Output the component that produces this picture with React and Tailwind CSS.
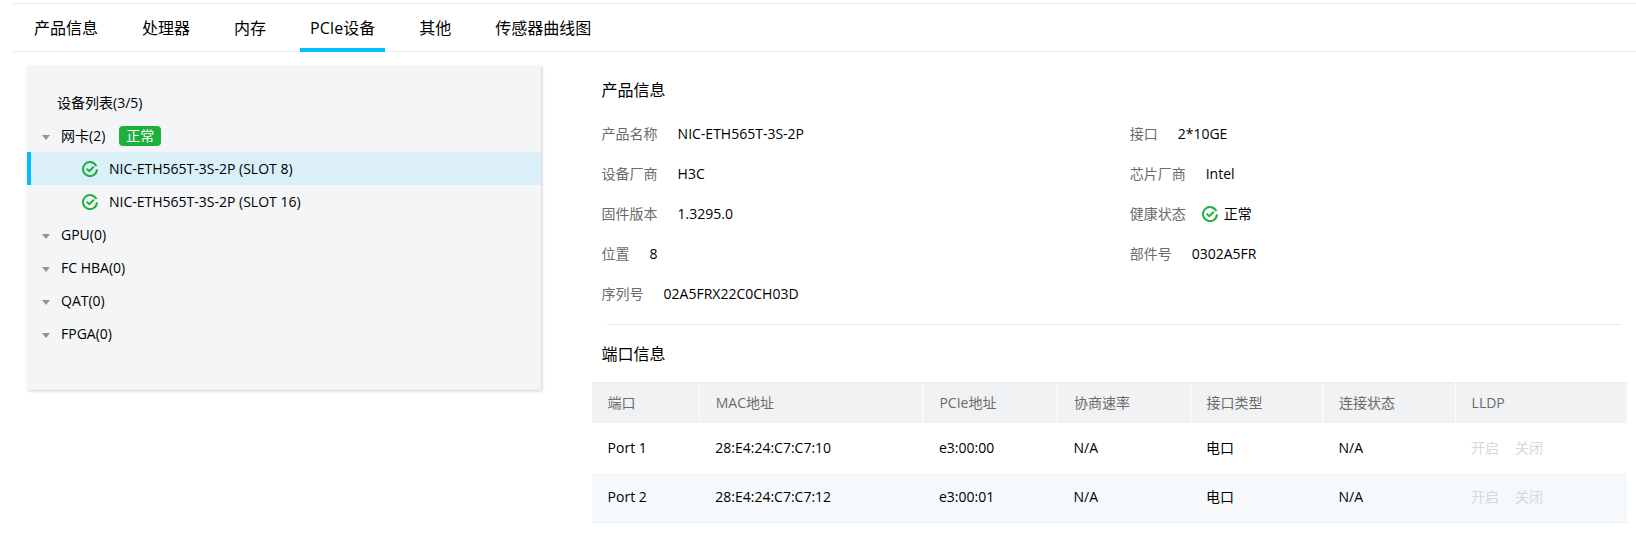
import { useState } from "react";

const tabs = ["产品信息", "处理器", "内存", "PCIe设备", "其他", "传感器曲线图"];

const deviceGroups = [
    {
        name: "网卡",
        status: "正常",
        devices: ["NIC-ETH565T-3S-2P (SLOT 8)", "NIC-ETH565T-3S-2P (SLOT 16)"],
    },
    { name: "GPU", devices: [] },
    { name: "FC HBA", devices: [] },
    { name: "QAT", devices: [] },
    { name: "FPGA", devices: [] },
];

const productInfo = [
    { label: "产品名称", value: "NIC-ETH565T-3S-2P" },
    { label: "接口", value: "2*10GE" },
    { label: "设备厂商", value: "H3C" },
    { label: "芯片厂商", value: "Intel" },
    { label: "固件版本", value: "1.3295.0" },
    { label: "健康状态", value: "正常", healthy: true },
    { label: "位置", value: "8" },
    { label: "部件号", value: "0302A5FR" },
    { label: "序列号", value: "02A5FRX22C0CH03D" },
];

const columns = [
    { title: "端口", width: "w-[10.4%]" },
    { title: "MAC地址", width: "w-[21.6%]" },
    { title: "PCIe地址", width: "w-[13%]" },
    { title: "协商速率", width: "w-[12.8%]" },
    { title: "接口类型", width: "w-[12.8%]" },
    { title: "连接状态", width: "w-[12.8%]" },
    { title: "LLDP", width: "w-[16.6%]" },
];

const ports = [
    ["Port 1", "28:E4:24:C7:C7:10", "e3:00:00", "N/A", "电口", "N/A"],
    ["Port 2", "28:E4:24:C7:C7:12", "e3:00:01", "N/A", "电口", "N/A"],
];

const HealthIcon = () => (
    <svg viewBox="0 0 16 16" className="w-4 h-4 shrink-0" fill="none" stroke="#1db03c" strokeWidth="2" aria-hidden="true">
        <path d="M14.4 5.2A7 7 0 1 0 15 8.4" />
        <path d="M4.6 7.6L7.3 10.2L11.8 5.8" />
    </svg>
);

const App = () => {
    const [activeTab, setActiveTab] = useState("PCIe设备");
    const [selected, setSelected] = useState(deviceGroups[0].devices[0]);
    const [closed, setClosed] = useState([]);

    const toggleGroup = (name) => {
        setClosed(closed.includes(name) ? closed.filter((n) => n !== name) : [...closed, name]);
    };

    return (
        <div className="min-h-screen bg-white pt-[3px] pl-3 text-sm text-black font-['Open_Sans','Noto_Sans_CJK_SC',sans-serif]">
            {/* Tabs */}
            <nav className="flex gap-6 pl-3 h-[49px] border-y border-[#ebebf0]">
                {tabs.map((tab) => (
                    <button
                        key={tab}
                        type="button"
                        onClick={() => setActiveTab(tab)}
                        className={`h-12 pt-1 px-[10px] text-base border-b-4 cursor-pointer ${activeTab === tab ? "border-[#00bfff]" : "border-transparent"
                            }`}
                    >
                        {tab}
                    </button>
                ))}
            </nav>

            <div className="flex items-start gap-[51px] pl-[15px] pr-[9px] pt-[14px]">
                {/* Device List */}
                <aside className="w-[32.1%] pt-5 pb-10 bg-[#f3f5f7] shadow-[1px_1px_3px_rgba(0,0,0,0.2)]">
                    <h2 className="h-[33px] leading-[33px] pl-[30px]">设备列表(3/5)</h2>
                    {deviceGroups.map((group) => (
                        <div key={group.name}>
                            <button
                                type="button"
                                onClick={() => toggleGroup(group.name)}
                                className="flex items-center w-full h-[33px] pl-[15px] cursor-pointer"
                            >
                                <svg viewBox="0 0 8 5" className="w-2 h-[5px] mt-1 mr-[11px]" fill="#909399" aria-hidden="true">
                                    <path d="M0 0h8L4 5z" />
                                </svg>
                                {group.name}({group.devices.length})
                                {group.status && (
                                    <span className="ml-[14px] px-[7px] h-5 leading-5 rounded bg-[#1db03c] text-white">
                                        {group.status}
                                    </span>
                                )}
                            </button>
                            {!closed.includes(group.name) &&
                                group.devices.map((device) => (
                                    <button
                                        key={device}
                                        type="button"
                                        onClick={() => setSelected(device)}
                                        className={`flex items-center gap-[11px] w-full h-[33px] pl-[51px] border-l-4 cursor-pointer ${selected === device ? "border-[#00bfff] bg-[#dbeff8]" : "border-transparent"
                                            }`}
                                    >
                                        <HealthIcon />
                                        {device}
                                    </button>
                                ))}
                        </div>
                    ))}
                </aside>

                <main className="flex-1">
                    {/* Product Info */}
                    <h2 className="mt-3 ml-[10px] text-base">产品信息</h2>
                    <dl className="grid grid-cols-[51.5%_1fr] mt-3 pl-[10px]">
                        {productInfo.map((item) => (
                            <div key={item.label} className="flex items-center h-10">
                                <dt className="text-[#6b6b6b]">{item.label}</dt>
                                <dd className={`flex items-center gap-[6px] ${item.healthy ? "ml-4" : "ml-5"}`}>
                                    {item.healthy && <HealthIcon />}
                                    {item.value}
                                </dd>
                            </div>
                        ))}
                    </dl>

                    <hr className="mt-[10px] ml-[15px] mr-[6px] border-[#ebebeb]" />

                    {/* Port Info */}
                    <h2 className="mt-[17px] mb-4 ml-[10px] text-base">端口信息</h2>
                    <table className="w-full table-fixed text-left border-y border-[#e6ebf5]">
                        <thead>
                            <tr className="h-10 bg-[#f1f2f4] text-[#6b6b6b]">
                                {columns.map((col) => (
                                    <th
                                        key={col.title}
                                        className={`pl-4 font-normal border-r border-white last:border-r-0 ${col.width}`}
                                    >
                                        {col.title}
                                    </th>
                                ))}
                            </tr>
                        </thead>
                        <tbody>
                            {ports.map((port) => (
                                <tr key={port[0]} className="h-[50px] even:bg-[#f5f9fc]">
                                    {port.map((cell, i) => (
                                        <td key={i} className="pl-4">{cell}</td>
                                    ))}
                                    <td className="pl-4">
                                        <button type="button" disabled className="mr-4 text-[#d8d8d8]">开启</button>
                                        <button type="button" disabled className="text-[#d8d8d8]">关闭</button>
                                    </td>
                                </tr>
                            ))}
                        </tbody>
                    </table>
                </main>
            </div>
        </div>
    );
};

export default App;
